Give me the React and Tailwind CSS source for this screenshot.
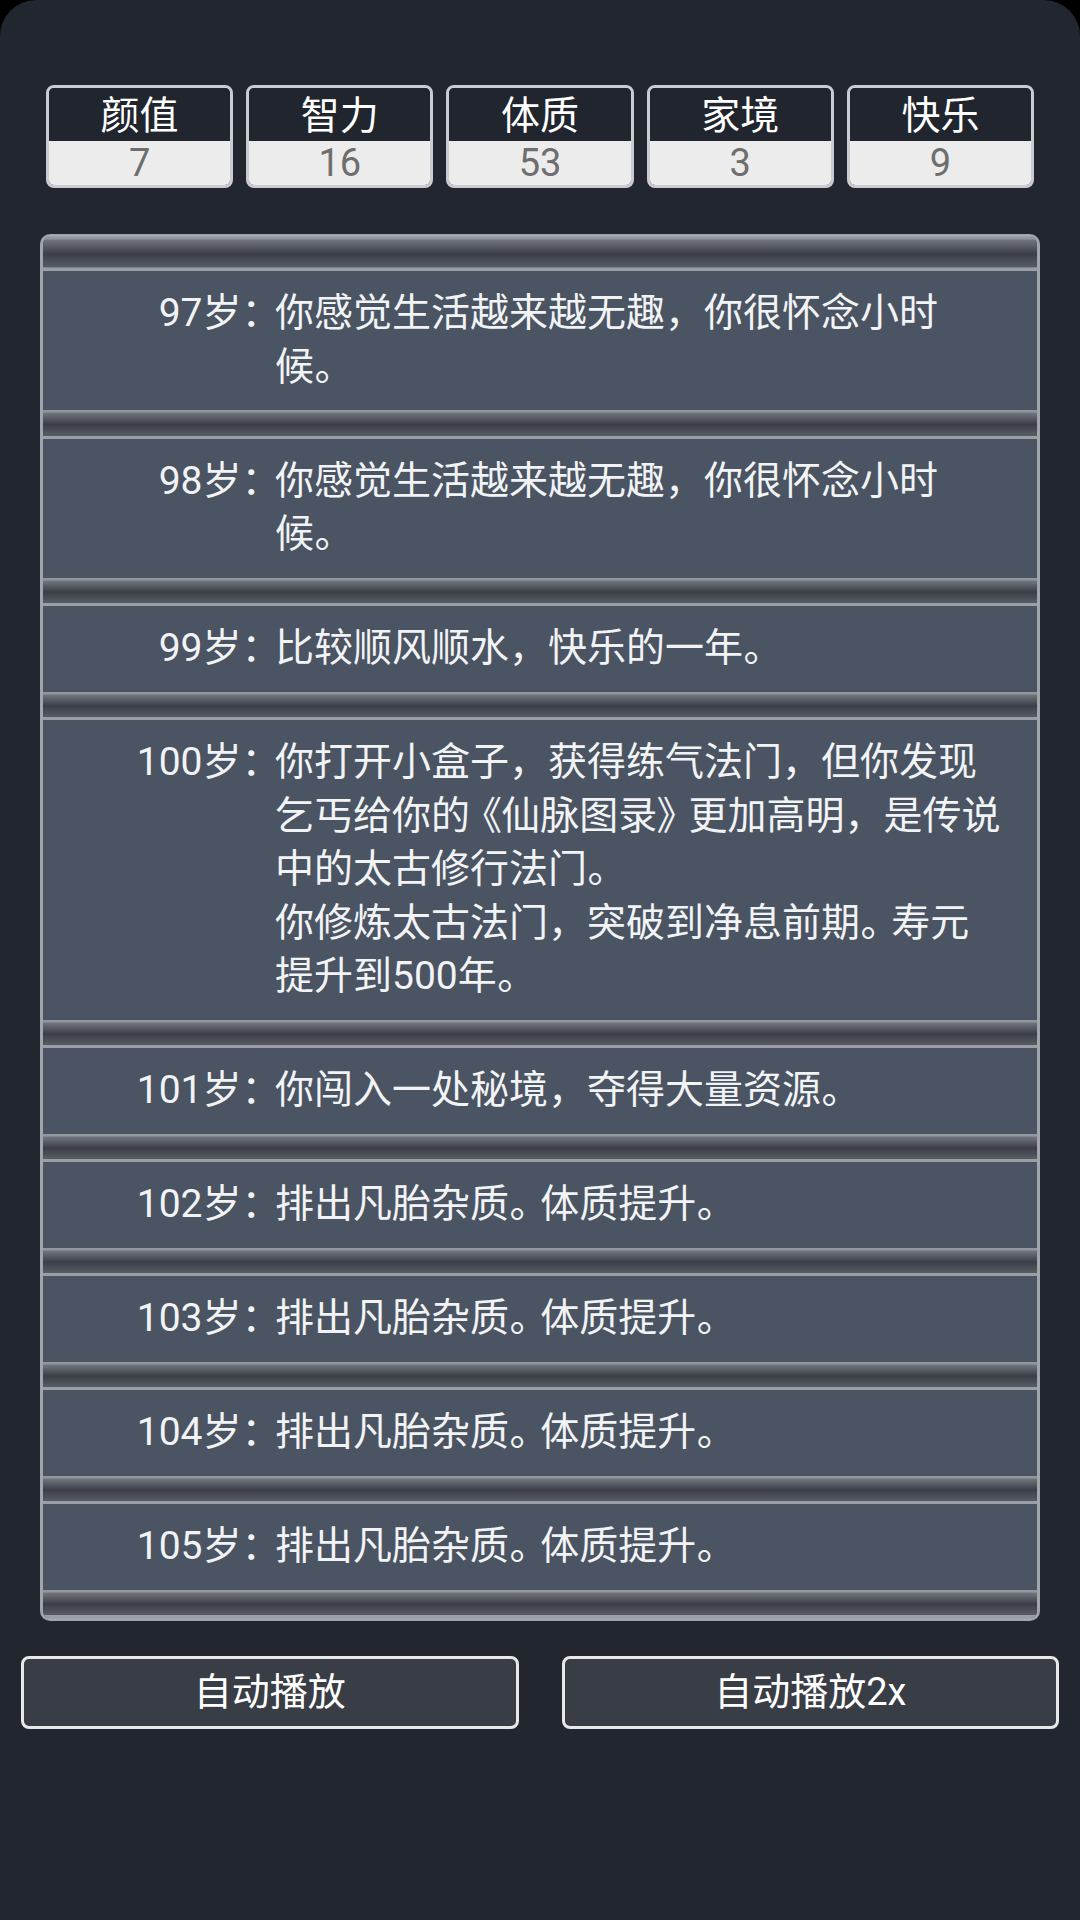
import React from 'react';

const stats = [
  { label: '颜值', value: 7 },
  { label: '智力', value: 16 },
  { label: '体质', value: 53 },
  { label: '家境', value: 3 },
  { label: '快乐', value: 9 },
];

const events = [
  { age: 97, lines: ['你感觉生活越来越无趣，你很怀念小时', '候。'] },
  { age: 98, lines: ['你感觉生活越来越无趣，你很怀念小时', '候。'] },
  { age: 99, lines: ['比较顺风顺水，快乐的一年。'] },
  {
    age: 100,
    lines: [
      '你打开小盒子，获得练气法门，但你发现',
      '乞丐给你的《仙脉图录》更加高明，是传说',
      '中的太古修行法门。',
      '你修炼太古法门，突破到净息前期。寿元',
      '提升到500年。',
    ],
  },
  { age: 101, lines: ['你闯入一处秘境，夺得大量资源。'] },
  { age: 102, lines: ['排出凡胎杂质。体质提升。'] },
  { age: 103, lines: ['排出凡胎杂质。体质提升。'] },
  { age: 104, lines: ['排出凡胎杂质。体质提升。'] },
  { age: 105, lines: ['排出凡胎杂质。体质提升。'] },
];

// punctuation in the game font is a little narrower than a full em
const renderLine = (text) =>
  text.split(/([。《》])/).map((part, i) => {
    if (part === '。') return <span key={i} className="mr-[0.3em] [font-feature-settings:'palt']">{part}</span>;
    if (part === '《') return <span key={i} className="ml-[0.3em] [font-feature-settings:'palt']">{part}</span>;
    if (part === '》') return <span key={i} className="mr-[0.3em] [font-feature-settings:'palt']">{part}</span>;
    return part;
  });

const Separator = ({ first }) => (
  <div
    className={
      first
        ? 'h-[34px] bg-[linear-gradient(to_bottom,#92969d_0px,#92969d_2px,#70747c_3px,#3b3e46_50%,#575b63_88%,#9a9ea5_91%,#9a9ea5_100%)]'
        : 'h-[28.5px] bg-[linear-gradient(to_bottom,#92969d_0px,#92969d_2px,#70747c_3px,#3b3e46_50%,#575b63_88%,#9a9ea5_90%,#9a9ea5_100%)]'
    }
  />
);

const App = () => {
  return (
    <div className="min-h-[1920px] bg-black font-['Roboto','Noto_Sans_CJK_SC',sans-serif]">
      <div className="min-h-[1920px] rounded-t-[36px] bg-[#21262f] pt-[85px]">
        <div className="flex gap-[13px] px-[46px]">
          {stats.map((s) => (
            <div
              key={s.label}
              className="flex-1 overflow-hidden rounded-[8px] border-[3px] border-[#c9ccd1]"
            >
              <div className="flex h-[53px] items-center justify-center bg-[#20252e] pt-[4px] text-[39px] leading-none text-white">
                {s.label}
              </div>
              <div className="flex h-[44px] items-center justify-center bg-[#ececec] text-[38px] leading-none text-[#6e6e6e]">
                {s.value}
              </div>
            </div>
          ))}
        </div>

        <div className="mx-[40px] mt-[46px] overflow-hidden rounded-[10px] border-[3px] border-[#a0a4ab] bg-[#4a5462]">
          <Separator first />
          {events.map((e) => (
            <React.Fragment key={e.age}>
              <div className="flex bg-[#4a5462] py-[16px] text-[39px] leading-[53.5px] text-[#f2f3f5]">
                <div className="w-[232px] shrink-0 pr-[14px] text-right [font-feature-settings:'palt']">{e.age}岁：</div>
                <div className="flex flex-col">
                  {e.lines.map((l, i) => (
                    <span key={i} className="whitespace-nowrap">{renderLine(l)}</span>
                  ))}
                </div>
              </div>
              <Separator />
            </React.Fragment>
          ))}
        </div>

        <div className="mt-[35px] flex gap-[43px] px-[21px]">
          <button className="flex h-[73px] flex-1 items-center justify-center rounded-[8px] border-[3px] border-[#e8e8e8] bg-[#393d46] text-[38px] text-white">
            自动播放
          </button>
          <button className="flex h-[73px] flex-1 items-center justify-center rounded-[8px] border-[3px] border-[#e8e8e8] bg-[#393d46] text-[38px] text-white">
            自动播放2x
          </button>
        </div>
      </div>
    </div>
  );
};

export default App;
